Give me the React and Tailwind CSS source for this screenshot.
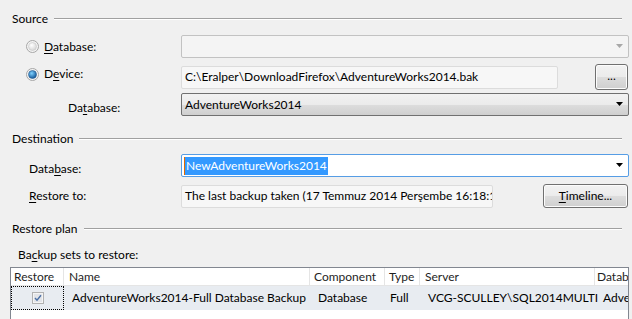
const font = { fontFamily: '"Segoe UI", Lato, "Open Sans", sans-serif' }

function GroupHeader({ title }) {
  return (
    <div className="flex h-[15px] items-center pr-[10px]">
      <span className="mr-[6px] text-[12px] leading-none text-black">{title}</span>
      <div className="h-[2px] flex-1 border-t border-b border-t-[#a0a0a0] border-b-white" />
    </div>
  )
}

function U({ children }) {
  return <span className="underline underline-offset-2">{children}</span>
}

function Arrow({ color = '#000' }) {
  return (
    <svg width="8" height="5" viewBox="0 0 8 5" className="shrink-0">
      <path d="M0 0h7L3.5 4z" fill={color} />
    </svg>
  )
}

function Radio({ checked }) {
  return (
    <svg width="13" height="13" viewBox="0 0 13 13" className="shrink-0">
      <defs>
        <radialGradient id={checked ? 'rg1' : 'rg0'} cx="0.4" cy="0.35" r="0.7">
          <stop offset="0" stopColor={checked ? '#7fd1ff' : '#ffffff'} />
          <stop offset="1" stopColor={checked ? '#0a4e90' : '#d4d4d4'} />
        </radialGradient>
      </defs>
      <circle cx="6.5" cy="6.5" r="6" fill="#f4f4f4" stroke="#a6a6a6" />
      <circle cx="6.5" cy="6.5" r="4" fill={checked ? 'url(#rg1)' : 'url(#rg0)'} stroke={checked ? '#2a5d91' : '#c8c8c8'} strokeWidth="0.6" />
    </svg>
  )
}

function VistaButton({ children, className }) {
  return (
    <div
      className={`flex shrink-0 items-center justify-center rounded-[3px] border border-[#707070] bg-[linear-gradient(#f2f2f2_0%,#ebebeb_50%,#dddddd_51%,#cfcfcf_100%)] text-[12px] text-black shadow-[inset_0_0_0_1px_#fcfcfc] ${className}`}
    >
      {children}
    </div>
  )
}

const columns = [
  { title: 'Restore', width: 'w-[53px]', head: 'pl-[3px]' },
  { title: 'Name', width: 'w-[246px]', head: 'pl-[5px]' },
  { title: 'Component', width: 'w-[75px]', head: 'pl-[4px]' },
  { title: 'Type', width: 'w-[35px]', head: 'pl-[4px]' },
  { title: 'Server', width: 'w-[175px]', head: 'pl-[5px]' },
  { title: 'Database', width: 'w-[120px]', head: 'pl-[2px]' },
]

export default function App() {
  return (
    <div className="h-[319px] w-[632px] overflow-hidden bg-[#f0f0f0] text-[12px] text-black" style={font}>
      <div className="flex flex-col pt-[11px] pl-[12px]">
        <GroupHeader title="Source" />

        {/* source database */}
        <div className="mt-[9px] flex h-[23px] items-center pr-[3px]">
          <div className="flex w-[169px] items-center pl-[14px]">
            <Radio checked={false} />
            <span className="ml-[5px]"><U>D</U>atabase:</span>
          </div>
          <div className="flex h-full flex-1 items-center justify-end rounded-[2px] border border-[#c2c2c2] bg-[#f4f4f4] pr-[4px]">
            <Arrow color="#a8a8a8" />
          </div>
        </div>

        {/* device */}
        <div className="mt-[6px] flex h-[26px] items-center pr-[4px]">
          <div className="flex w-[169px] -translate-y-[3px] items-center pl-[14px]">
            <Radio checked />
            <span className="ml-[5px]">D<U>e</U>vice:</span>
          </div>
          <div className="flex h-[23px] w-[377px] items-center whitespace-nowrap rounded-[2px] border border-[#dcdcdc] bg-[#f7f7f7] pl-[3px]">
            C:\Eralper\DownloadFirefox\AdventureWorks2014.bak
          </div>
          <VistaButton className="ml-auto h-[26px] w-[33px] pb-[2px] text-[#2a3a5a]">...</VistaButton>
        </div>

        {/* source db */}
        <div className="mt-[3px] flex h-[23px] items-center pr-[3px]">
          <div className="w-[169px] translate-y-[3px] pl-[56px]">
            Da<U>t</U>abase:
          </div>
          <div className="flex h-full flex-1 items-center justify-between rounded-[2px] border border-[#707070] bg-[linear-gradient(#f2f2f2_0%,#ebebeb_50%,#dddddd_51%,#cfcfcf_100%)] pr-[4px] pl-[3px]">
            <span>AdventureWorks2014</span>
            <Arrow />
          </div>
        </div>

        <div className="mt-[15px]">
          <GroupHeader title="Destination" />
        </div>

        {/* destination db */}
        <div className="mt-[8px] flex h-[23px] items-center pr-[3px]">
          <div className="w-[169px] translate-y-[3px] pl-[17px]">
            Data<U>b</U>ase:
          </div>
          <div className="flex h-full flex-1 items-center justify-between rounded-[2px] border border-[#569de5] bg-white pr-[4px] pl-[2px]">
            <span className="border-l border-[#e26a00] bg-[#3399ff] pr-[1px] pl-[1px] text-white">NewAdventureWorks2014</span>
            <Arrow />
          </div>
        </div>

        {/* restore to */}
        <div className="mt-[7px] flex h-[24px] items-center pr-[4px]">
          <div className="w-[169px] pl-[17px]">
            <U>R</U>estore to:
          </div>
          <div className="flex h-[23px] w-[312px] items-center overflow-hidden whitespace-nowrap rounded-[2px] border border-[#dcdcdc] bg-[#f7f7f7] pl-[3px]">
            The last backup taken (17 Temmuz 2014 Perşembe 16:18:1
          </div>
          <VistaButton className="ml-auto h-[24px] w-[85px]">
            <span><U>T</U>imeline...</span>
          </VistaButton>
        </div>

        <div className="mt-[13px]">
          <GroupHeader title="Restore plan" />
        </div>

        <div className="mt-[11px] flex h-[15px] items-center pl-[6px]">
          Ba<U>c</U>kup sets to restore:
        </div>

        {/* table */}
        <div className="mt-[5px] ml-[-2px] mr-[3px] h-[60px] overflow-hidden border border-[#828790] bg-white">
          <div className="flex h-[18px] w-max border-b border-[#e5e5e5] text-[#1e1e1e]">
            {columns.map((c, i) => (
              <div
                key={c.title}
                className={`h-full shrink-0 whitespace-nowrap leading-[17px] ${c.width} ${c.head} ${i < columns.length - 1 ? 'border-r border-[#e5e5e5]' : ''}`}
              >
                {c.title}
              </div>
            ))}
          </div>
          <div className="flex h-[24px] w-max items-center whitespace-nowrap bg-[#e8ecf1]">
            <div className="flex h-full w-[53px] shrink-0 items-center justify-center border border-dotted border-black">
              <svg width="12" height="12" viewBox="0 0 12 12">
                <rect x="0.5" y="0.5" width="11" height="11" fill="#f4f4f4" stroke="#b1b1b1" />
                <rect x="2" y="2" width="8" height="8" fill="#e2e4e8" />
                <path d="M3 6l2 2.2 4-5" fill="none" stroke="#4a6fa5" strokeWidth="1.4" />
              </svg>
            </div>
            <div className="w-[246px] shrink-0 pl-[8px]">AdventureWorks2014-Full Database Backup</div>
            <div className="w-[75px] shrink-0 pl-[8px]">Database</div>
            <div className="w-[35px] shrink-0 pl-[5px]">Full</div>
            <div className="w-[175px] shrink-0 pl-[8px]">VCG-SCULLEY\SQL2014MULTI</div>
            <div className="w-[120px] shrink-0 pl-[8px]">AdventureWorks2014</div>
          </div>
        </div>
      </div>
    </div>
  )
}
